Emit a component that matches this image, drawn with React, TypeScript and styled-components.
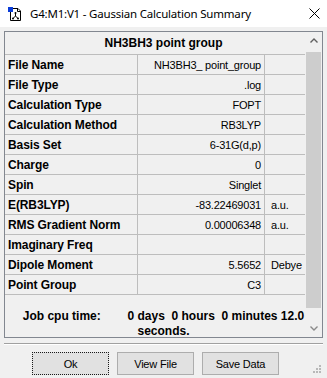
import React from 'react'
import styled, { createGlobalStyle } from 'styled-components'

const GlobalStyle = createGlobalStyle`
  html, body {
    margin: 0;
    padding: 0;
    background: #f0f0f0;
  }
  body {
    font-family: 'Liberation Sans', Arial, sans-serif;
  }
`

interface RowData {
  label: string
  value?: string
  unit?: string
}

const rows: RowData[] = [
  { label: 'File Name', value: 'NH3BH3_ point_group' },
  { label: 'File Type', value: '.log' },
  { label: 'Calculation Type', value: 'FOPT' },
  { label: 'Calculation Method', value: 'RB3LYP' },
  { label: 'Basis Set', value: '6-31G(d,p)' },
  { label: 'Charge', value: '0' },
  { label: 'Spin', value: 'Singlet' },
  { label: 'E(RB3LYP)', value: '-83.22469031', unit: 'a.u.' },
  { label: 'RMS Gradient Norm', value: '0.00006348', unit: 'a.u.' },
  { label: 'Imaginary Freq' },
  { label: 'Dipole Moment', value: '5.5652', unit: 'Debye' },
  { label: 'Point Group', value: 'C3' }
]

const Window = styled.div`
  position: relative;
  width: 327px;
  height: 378px;
  background: #f0f0f0;
  display: flex;
  flex-direction: column;
  overflow: hidden;
`

const TitleBar = styled.div`
  height: 27px;
  background: #ffffff;
  display: flex;
  align-items: center;
  padding-left: 7px;
  padding-right: 6px;
  flex-shrink: 0;
`

const TitleText = styled.span`
  margin-left: 7px;
  font-family: 'Noto Sans', 'Liberation Sans', sans-serif;
  font-size: 11.5px;
  letter-spacing: -0.2px;
  color: #000;
`

const CloseButton = styled.div`
  margin-left: auto;
  width: 14px;
  height: 14px;
  display: flex;
  align-items: center;
  justify-content: center;
`

const Body = styled.div`
  padding: 4px 4px 0 4px;
  display: flex;
  flex-direction: column;
`

const ListBox = styled.div`
  position: relative;
  height: 307px;
  border: 1px solid #828790;
  box-sizing: border-box;
  overflow: hidden;
`

const HeaderRow = styled.div`
  height: 23px;
  box-sizing: border-box;
  border-bottom: 1px solid #bdbdbd;
  display: flex;
  align-items: center;
  justify-content: center;
  font-size: 12px;
  font-weight: bold;
  color: #000;
`

const Row = styled.div`
  height: 20px;
  box-sizing: border-box;
  border-bottom: 1px solid #bdbdbd;
  display: grid;
  grid-template-columns: 133px 127px 1fr;
`

const Cell = styled.div<{ $kind: 'label' | 'value' | 'unit' }>`
  display: flex;
  align-items: center;
  box-sizing: border-box;
  overflow: hidden;
  white-space: nowrap;
  border-right: ${p => (p.$kind === 'unit' ? 'none' : '1px solid #bdbdbd')};
  justify-content: ${p => (p.$kind === 'value' ? 'flex-end' : 'flex-start')};
  padding: ${p => (p.$kind === 'label' ? '0 0 0 3px' : p.$kind === 'value' ? '0 3px 0 0' : '0 0 0 6px')};
  font-size: ${p => (p.$kind === 'label' ? '12px' : '11px')};
  font-weight: ${p => (p.$kind === 'label' ? 'bold' : 'normal')};
  letter-spacing: ${p => (p.$kind === 'label' ? '-0.1px' : '-0.2px')};
  color: #000;
`

const CpuText = styled.div`
  height: 42px;
  box-sizing: border-box;
  padding-top: 14px;
  text-align: center;
  white-space: pre-wrap;
  font-size: 12px;
  font-weight: bold;
  line-height: 15px;
  color: #000;
`

const ScrollBar = styled.div`
  position: absolute;
  top: 0;
  right: 0;
  bottom: 0;
  width: 17px;
  background: #f0f0f0;
  display: flex;
  flex-direction: column;
`

const ScrollArrow = styled.div`
  height: 17px;
  display: flex;
  align-items: center;
  justify-content: center;
  flex-shrink: 0;
`

const ScrollTrack = styled.div`
  flex: 1;
  padding: 3px 1px 12px 1px;
  display: flex;
`

const ScrollThumb = styled.div`
  flex: 1;
  background: #cdcdcd;
`

const Separator = styled.div`
  margin-top: 5px;
  height: 1px;
  background: #a0a0a0;
  border-bottom: 1px solid #ffffff;
`

const ButtonRow = styled.div`
  display: flex;
  gap: 8px;
  padding-left: 28px;
  margin-top: 7px;
`

const Button = styled.button<{ $focused?: boolean }>`
  width: 77px;
  height: 23px;
  box-sizing: border-box;
  background: #e1e1e1;
  border: ${p => (p.$focused ? '1px dotted #1a1a1a' : '1px solid #adadad')};
  font-family: 'Liberation Sans', Arial, sans-serif;
  font-size: 11px;
  letter-spacing: -0.2px;
  color: #000;
  padding: 0;
  margin: 0;
`

const Grip = styled.svg`
  position: absolute;
  right: 5px;
  bottom: 4px;
`

const AppIcon = () => (
  <svg width="16" height="16" viewBox="0 0 16 16">
    <path d="M3.5 2.5 H11 L13.5 5 V14.5 H3.5 Z" fill="#fff" stroke="#000" />
    <path d="M10.5 2.5 V5.5 H13.5" fill="none" stroke="#000" />
    <rect x="1" y="1" width="5" height="5" fill="#0a3cd8" />
    <path d="M8.5 7 V10 M8.5 10 L6 12.5 M8.5 10 L11 12.5" stroke="#000" strokeWidth="1" fill="none" />
    <circle cx="8.5" cy="7" r="1" fill="#000" />
    <circle cx="6" cy="12.5" r="1" fill="#000" />
    <circle cx="11" cy="12.5" r="1" fill="#000" />
  </svg>
)

const CloseIcon = () => (
  <svg width="11" height="11" viewBox="0 0 11 11">
    <path d="M0.5 0.5 L10.5 10.5 M10.5 0.5 L0.5 10.5" stroke="#000" strokeWidth="1" />
  </svg>
)

const Chevron = ({ up, color }: { up?: boolean; color: string }) => (
  <svg width="8" height="5" viewBox="0 0 8 5">
    <polyline
      points={up ? '0.5,4.5 4,1 7.5,4.5' : '0.5,0.5 4,4 7.5,0.5'}
      fill="none"
      stroke={color}
      strokeWidth="1.4"
    />
  </svg>
)

export default function App(): JSX.Element {
  return (
    <>
      <GlobalStyle />
      <Window>
        <TitleBar>
          <AppIcon />
          <TitleText>G4:M1:V1 - Gaussian Calculation Summary</TitleText>
          <CloseButton>
            <CloseIcon />
          </CloseButton>
        </TitleBar>
        <Body>
          <ListBox>
            <HeaderRow>NH3BH3 point group</HeaderRow>
            {rows.map(r => (
              <Row key={r.label}>
                <Cell $kind="label">{r.label}</Cell>
                <Cell $kind="value">{r.value}</Cell>
                <Cell $kind="unit">{r.unit}</Cell>
              </Row>
            ))}
            <CpuText>{'Job cpu time:        0 days  0 hours  0 minutes 12.0 seconds.'}</CpuText>
            <ScrollBar>
              <ScrollArrow>
                <Chevron up color="#606060" />
              </ScrollArrow>
              <ScrollTrack>
                <ScrollThumb />
              </ScrollTrack>
              <ScrollArrow>
                <Chevron color="#8a8a8a" />
              </ScrollArrow>
            </ScrollBar>
          </ListBox>
          <Separator />
          <ButtonRow>
            <Button $focused>Ok</Button>
            <Button>View File</Button>
            <Button>Save Data</Button>
          </ButtonRow>
        </Body>
        <Grip width="9" height="9" viewBox="0 0 9 9">
          <rect x="6" y="0" width="2" height="2" fill="#b8b8b8" />
          <rect x="3" y="3" width="2" height="2" fill="#b8b8b8" />
          <rect x="6" y="3" width="2" height="2" fill="#b8b8b8" />
          <rect x="0" y="6" width="2" height="2" fill="#b8b8b8" />
          <rect x="3" y="6" width="2" height="2" fill="#b8b8b8" />
          <rect x="6" y="6" width="2" height="2" fill="#b8b8b8" />
        </Grip>
      </Window>
    </>
  )
}
